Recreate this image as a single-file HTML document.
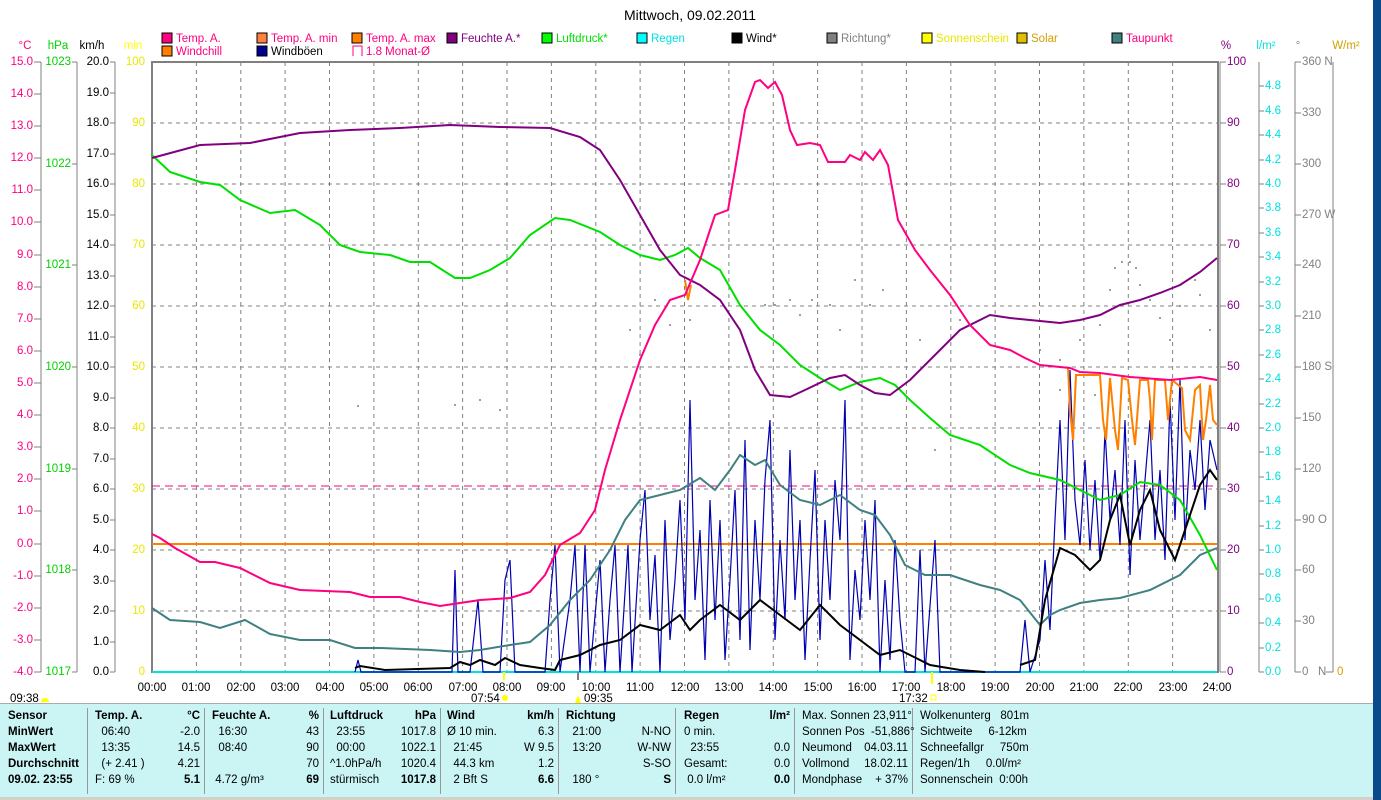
<!DOCTYPE html>
<html><head><meta charset="utf-8"><style>
html,body{margin:0;padding:0;background:#fff;width:1381px;height:800px;overflow:hidden;font-family:"Liberation Sans",sans-serif}
svg text{font-family:"Liberation Sans",sans-serif;font-size:11.5px}
.tb{position:absolute;left:0;top:703px;width:1373px;height:93px;background:#cbf5f5;border-top:1px solid #aaa}
.c{position:absolute;top:4px;height:86px;border-right:1px solid #999;font-size:11.5px;line-height:16px}
.c div{white-space:nowrap;position:relative;height:16px}
.c b{font-weight:bold}
.r{position:absolute;right:4px;top:0}
</style></head><body>
<svg width="1381" height="800" style="position:absolute;left:0;top:0">
<rect x="1373" y="0" width="8" height="800" fill="#0a4a8a"/>
<text x="690" y="20" text-anchor="middle" style="font-size:14px">Mittwoch, 09.02.2011</text>
<g>
<rect x="162" y="33" width="10" height="10" fill="#ff0080" stroke="#000"/><text x="176" y="42" fill="#ff0080">Temp. A.</text>
<rect x="257" y="33" width="10" height="10" fill="#ff8040" stroke="#000"/><text x="271" y="42" fill="#ff0080">Temp. A. min</text>
<rect x="352" y="33" width="10" height="10" fill="#ff8000" stroke="#000"/><text x="366" y="42" fill="#ff0080">Temp. A. max</text>
<rect x="447" y="33" width="10" height="10" fill="#800080" stroke="#000"/><text x="461" y="42" fill="#800080">Feuchte A.*</text>
<rect x="542" y="33" width="10" height="10" fill="#00ff00" stroke="#000"/><text x="556" y="42" fill="#00e000">Luftdruck*</text>
<rect x="637" y="33" width="10" height="10" fill="#00ffff" stroke="#000"/><text x="651" y="42" fill="#00e0e0">Regen</text>
<rect x="732" y="33" width="10" height="10" fill="#000" stroke="#000"/><text x="746" y="42">Wind*</text>
<rect x="827" y="33" width="10" height="10" fill="#808080" stroke="#000"/><text x="841" y="42" fill="#808080">Richtung*</text>
<rect x="922" y="33" width="10" height="10" fill="#ffff00" stroke="#000"/><text x="936" y="42" fill="#e8e800">Sonnenschein</text>
<rect x="1017" y="33" width="10" height="10" fill="#e0c000" stroke="#000"/><text x="1031" y="42" fill="#d0a000">Solar</text>
<rect x="1112" y="33" width="10" height="10" fill="#408080" stroke="#000"/><text x="1126" y="42" fill="#ff0080">Taupunkt</text>
<rect x="162" y="46" width="10" height="10" fill="#ff8000" stroke="#000"/><text x="176" y="55" fill="#ff0080">Windchill</text>
<rect x="257" y="46" width="10" height="10" fill="#000090" stroke="#000"/><text x="271" y="55">Windböen</text>
<path d="M353 56V46H362V56" fill="none" stroke="#ff0080"/><text x="366" y="55" fill="#ff0080">1.8 Monat-Ø</text>
</g>
<text x="25" y="49" fill="#ff0080" text-anchor="middle">°C</text>
<text x="58" y="49" fill="#00d000" text-anchor="middle">hPa</text>
<text x="92" y="49" text-anchor="middle">km/h</text>
<text x="133" y="49" fill="#ffff00" text-anchor="middle">min</text>
<text x="1226" y="49" fill="#800080" text-anchor="middle">%</text>
<text x="1266" y="49" fill="#00e0e0" text-anchor="middle">l/m²</text>
<text x="1298" y="49" fill="#808080" text-anchor="middle">°</text>
<text x="1346" y="49" fill="#d0a000" text-anchor="middle">W/m²</text>
<g stroke="#808080" fill="none">
<path d="M41 62V672M77 62V672M115 62V672M1259 62V672M1295 62V672M1333 62V672"/>
</g>
<g stroke="#808080" stroke-dasharray="4,4" stroke-width="1">
<path d="M196.4 62V672M240.8 62V672M285.1 62V672M329.5 62V672M373.9 62V672M418.3 62V672M462.6 62V672M507 62V672M551.4 62V672M595.8 62V672M640.1 62V672M684.5 62V672M728.9 62V672M773.3 62V672M817.6 62V672M862 62V672M906.4 62V672M950.8 62V672M995.1 62V672M1039.5 62V672M1083.9 62V672M1128.3 62V672M1172.6 62V672"/>
<path d="M152 123H1217M152 184H1217M152 245H1217M152 306H1217M152 367H1217M152 428H1217M152 489H1217M152 550H1217M152 611H1217"/>
</g>
<rect x="152" y="62" width="1066" height="610" fill="none" stroke="#808080" stroke-width="2"/>
<path d="M1220 62V672" stroke="#808080"/>
<g fill="#ff0080" text-anchor="end" dominant-baseline="middle">
<text x="33" y="62">15.0</text><text x="33" y="94">14.0</text><text x="33" y="126">13.0</text><text x="33" y="158">12.0</text><text x="33" y="190">11.0</text><text x="33" y="222">10.0</text><text x="33" y="255">9.0</text><text x="33" y="287">8.0</text><text x="33" y="319">7.0</text><text x="33" y="351">6.0</text><text x="33" y="383">5.0</text><text x="33" y="415">4.0</text><text x="33" y="447">3.0</text><text x="33" y="479">2.0</text><text x="33" y="511">1.0</text><text x="33" y="544">0.0</text><text x="33" y="576">-1.0</text><text x="33" y="608">-2.0</text><text x="33" y="640">-3.0</text><text x="33" y="672">-4.0</text>
</g>
<g stroke="#808080"><path d="M34 62H41M34 94H41M34 126H41M34 158H41M34 190H41M34 222H41M34 255H41M34 287H41M34 319H41M34 351H41M34 383H41M34 415H41M34 447H41M34 479H41M34 511H41M34 544H41M34 576H41M34 608H41M34 640H41M34 672H41"/></g>
<g fill="#00d000" text-anchor="end" dominant-baseline="middle">
<text x="71" y="62">1023</text><text x="71" y="164">1022</text><text x="71" y="265">1021</text><text x="71" y="367">1020</text><text x="71" y="469">1019</text><text x="71" y="570">1018</text><text x="71" y="672">1017</text>
</g>
<g stroke="#808080"><path d="M72 62H77M72 164H77M72 265H77M72 367H77M72 469H77M72 570H77M72 672H77"/></g>
<g text-anchor="end" dominant-baseline="middle">
<text x="109" y="62">20.0</text><text x="109" y="93">19.0</text><text x="109" y="123">18.0</text><text x="109" y="154">17.0</text><text x="109" y="184">16.0</text><text x="109" y="215">15.0</text><text x="109" y="245">14.0</text><text x="109" y="276">13.0</text><text x="109" y="306">12.0</text><text x="109" y="337">11.0</text><text x="109" y="367">10.0</text><text x="109" y="398">9.0</text><text x="109" y="428">8.0</text><text x="109" y="459">7.0</text><text x="109" y="489">6.0</text><text x="109" y="520">5.0</text><text x="109" y="550">4.0</text><text x="109" y="581">3.0</text><text x="109" y="611">2.0</text><text x="109" y="642">1.0</text><text x="109" y="672">0.0</text>
</g>
<g stroke="#808080"><path d="M110 62H115M110 93H115M110 123H115M110 154H115M110 184H115M110 215H115M110 245H115M110 276H115M110 306H115M110 337H115M110 367H115M110 398H115M110 428H115M110 459H115M110 489H115M110 520H115M110 550H115M110 581H115M110 611H115M110 642H115M110 672H115"/></g>
<g fill="#e8e800" text-anchor="end" dominant-baseline="middle">
<text x="145" y="62">100</text><text x="145" y="123">90</text><text x="145" y="184">80</text><text x="145" y="245">70</text><text x="145" y="306">60</text><text x="145" y="367">50</text><text x="145" y="428">40</text><text x="145" y="489">30</text><text x="145" y="550">20</text><text x="145" y="611">10</text><text x="145" y="672">0</text>
</g>
<g fill="#800080" dominant-baseline="middle">
<text x="1227" y="62">100</text><text x="1227" y="123">90</text><text x="1227" y="184">80</text><text x="1227" y="245">70</text><text x="1227" y="306">60</text><text x="1227" y="367">50</text><text x="1227" y="428">40</text><text x="1227" y="489">30</text><text x="1227" y="550">20</text><text x="1227" y="611">10</text><text x="1227" y="672">0</text>
</g>
<g stroke="#808080"><path d="M1220 62H1226M1220 123H1226M1220 184H1226M1220 245H1226M1220 306H1226M1220 367H1226M1220 428H1226M1220 489H1226M1220 550H1226M1220 611H1226M1220 672H1226"/></g>
<g fill="#00e0e0" dominant-baseline="middle">
<text x="1265" y="86">4.8</text><text x="1265" y="111">4.6</text><text x="1265" y="135">4.4</text><text x="1265" y="160">4.2</text><text x="1265" y="184">4.0</text><text x="1265" y="208">3.8</text><text x="1265" y="233">3.6</text><text x="1265" y="257">3.4</text><text x="1265" y="282">3.2</text><text x="1265" y="306">3.0</text><text x="1265" y="330">2.8</text><text x="1265" y="355">2.6</text><text x="1265" y="379">2.4</text><text x="1265" y="404">2.2</text><text x="1265" y="428">2.0</text><text x="1265" y="452">1.8</text><text x="1265" y="477">1.6</text><text x="1265" y="501">1.4</text><text x="1265" y="526">1.2</text><text x="1265" y="550">1.0</text><text x="1265" y="574">0.8</text><text x="1265" y="599">0.6</text><text x="1265" y="623">0.4</text><text x="1265" y="648">0.2</text><text x="1265" y="672">0.0</text>
</g>
<g stroke="#808080"><path d="M1259 86H1264M1259 111H1264M1259 135H1264M1259 160H1264M1259 184H1264M1259 208H1264M1259 233H1264M1259 257H1264M1259 282H1264M1259 306H1264M1259 330H1264M1259 355H1264M1259 379H1264M1259 404H1264M1259 428H1264M1259 452H1264M1259 477H1264M1259 501H1264M1259 526H1264M1259 550H1264M1259 574H1264M1259 599H1264M1259 623H1264M1259 648H1264M1259 672H1264"/>
<path d="M1295 62H1301M1295 113H1301M1295 164H1301M1295 215H1301M1295 265H1301M1295 316H1301M1295 367H1301M1295 418H1301M1295 469H1301M1295 520H1301M1295 570H1301M1295 621H1301M1295 672H1301M1326 672H1333"/></g>
<g fill="#808080" dominant-baseline="middle">
<text x="1302" y="62">360 N</text><text x="1302" y="113">330</text><text x="1302" y="164">300</text><text x="1302" y="215">270 W</text><text x="1302" y="265">240</text><text x="1302" y="316">210</text><text x="1302" y="367">180 S</text><text x="1302" y="418">150</text><text x="1302" y="469">120</text><text x="1302" y="520">90  O</text><text x="1302" y="570">60</text><text x="1302" y="621">30</text><text x="1302" y="672">0</text><text x="1318" y="672">N</text>
</g>
<text x="1337" y="672" fill="#d0a000" dominant-baseline="middle">0</text>
<path d="M152 486H1217" stroke="#ff0080" stroke-dasharray="8,5" stroke-width="1"/>
<path d="M152 544H1217" stroke="#ff8000" stroke-width="2"/>
<path d="M152 672H1217" stroke="#00e0e0" stroke-width="2"/>
<g fill="#808080">
<circle cx="358" cy="406" r="1"/><circle cx="455" cy="405" r="1"/><circle cx="480" cy="400" r="1"/><circle cx="500" cy="410" r="1"/><circle cx="630" cy="330" r="1"/><circle cx="640" cy="355" r="1"/><circle cx="655" cy="300" r="1"/><circle cx="670" cy="325" r="1"/><circle cx="690" cy="320" r="1"/><circle cx="765" cy="305" r="1"/><circle cx="775" cy="305" r="1"/><circle cx="790" cy="300" r="1"/><circle cx="800" cy="315" r="1"/><circle cx="812" cy="300" r="1"/><circle cx="830" cy="305" r="1"/><circle cx="840" cy="330" r="1"/><circle cx="855" cy="280" r="1"/><circle cx="870" cy="305" r="1"/><circle cx="883" cy="290" r="1"/><circle cx="920" cy="340" r="1"/><circle cx="935" cy="450" r="1"/><circle cx="960" cy="320" r="1"/><circle cx="1040" cy="350" r="1"/><circle cx="1060" cy="360" r="1"/><circle cx="1080" cy="340" r="1"/><circle cx="1100" cy="325" r="1"/><circle cx="1110" cy="290" r="1"/><circle cx="1115" cy="268" r="1"/><circle cx="1122" cy="262" r="1"/><circle cx="1130" cy="262" r="1"/><circle cx="1136" cy="268" r="1"/><circle cx="1140" cy="285" r="1"/><circle cx="1150" cy="300" r="1"/><circle cx="1160" cy="318" r="1"/><circle cx="1170" cy="340" r="1"/><circle cx="1180" cy="306" r="1"/><circle cx="1195" cy="280" r="1"/><circle cx="1200" cy="295" r="1"/><circle cx="1210" cy="330" r="1"/><circle cx="1060" cy="390" r="1"/><circle cx="1095" cy="395" r="1"/>
</g>
<polyline fill="none" stroke="#0000b0" stroke-width="1.2" points="355,672 358,660 361,672 452,672 455,570 458,672 470,672 478,600 483,672 500,672 505,580 510,560 515,672 545,672 550,600 555,545 560,672 570,600 575,545 580,672 585,545 590,672 600,560 605,672 610,600 615,545 620,672 628,545 632,672 640,540 645,490 650,620 655,555 660,672 665,520 670,640 675,580 680,500 685,620 690,400 695,600 700,530 705,660 710,500 715,620 720,520 725,660 730,580 735,490 740,640 745,440 750,650 755,520 760,600 765,480 770,420 775,640 780,540 785,620 790,450 795,600 800,520 805,660 810,560 815,470 820,640 825,520 830,600 835,480 840,540 845,400 850,660 855,570 860,620 865,520 870,600 875,500 880,672 885,580 890,660 895,540 900,620 905,672 915,672 920,550 925,672 935,540 940,672 1020,672 1025,620 1030,672 1040,640 1045,560 1050,630 1055,520 1060,420 1065,540 1070,370 1075,500 1080,545 1085,460 1090,550 1095,480 1100,560 1105,430 1110,520 1115,470 1120,545 1125,420 1130,575 1135,460 1140,540 1145,480 1150,420 1155,540 1160,470 1165,560 1170,400 1175,520 1180,380 1185,540 1190,450 1195,490 1200,420 1205,510 1210,440 1217,470"/>
<polyline fill="none" stroke="#408080" stroke-width="2" points="152,608 170,620 200,622 220,628 245,620 270,634 300,640 330,640 355,648 380,648 430,650 460,652 480,650 510,645 530,642 550,625 570,600 590,580 610,550 625,520 640,500 660,495 680,490 700,478 715,490 730,470 740,455 755,465 765,460 780,485 800,500 820,505 840,495 860,510 875,515 890,535 905,565 925,575 950,575 980,585 1000,590 1020,600 1040,625 1050,615 1060,610 1080,603 1100,600 1120,598 1150,590 1180,575 1200,555 1217,548"/>
<polyline fill="none" stroke="#00e000" stroke-width="2" points="152,155 170,172 200,182 220,185 240,200 270,213 295,210 320,225 340,245 360,252 390,255 410,262 430,262 455,278 470,278 490,270 510,258 530,235 555,218 570,220 600,232 620,245 640,255 660,260 675,255 688,248 700,258 720,270 740,305 760,330 780,345 800,365 820,378 840,390 860,382 880,378 895,385 910,400 930,418 950,435 980,445 1010,465 1030,473 1060,480 1080,490 1100,500 1120,495 1140,482 1160,485 1180,500 1200,535 1217,570"/>
<polyline fill="none" stroke="#800080" stroke-width="2" points="152,158 200,145 250,143 300,133 350,130 400,128 450,125 500,127 550,128 580,137 600,150 620,180 640,215 660,250 680,275 700,285 720,300 740,330 755,370 770,395 790,397 805,390 830,378 845,375 860,385 875,393 890,395 910,380 930,360 960,330 990,315 1010,318 1030,320 1060,323 1080,320 1100,315 1120,305 1140,300 1160,293 1180,285 1200,272 1217,258"/>
<polyline fill="none" stroke="#ff8000" stroke-width="2" points="685,280 688,300 691,285"/>
<polyline fill="none" stroke="#ff8000" stroke-width="2" points="1068,367 1070,410 1073,440 1076,375 1100,375 1103,420 1106,440 1110,378 1115,430 1118,450 1122,378 1128,380 1132,420 1135,445 1140,380 1148,380 1150,400 1152,440 1155,380 1165,380 1168,420 1172,380 1182,388 1185,430 1190,440 1195,390 1200,385 1203,440 1206,420 1210,385 1213,420 1217,425"/>
<polyline fill="none" stroke="#ff0080" stroke-width="2" points="152,534 160,538 175,548 200,562 215,562 240,568 270,583 300,590 350,592 370,597 400,597 420,602 440,606 460,603 480,600 510,598 530,592 545,575 560,545 580,533 595,510 605,470 620,420 640,360 655,325 670,300 685,295 700,260 715,215 728,210 735,170 745,110 755,82 760,80 768,88 775,82 782,95 790,130 797,145 810,143 820,145 828,162 845,162 850,155 860,160 865,152 873,160 880,150 888,165 898,220 915,250 930,270 950,295 970,325 990,345 1010,350 1025,358 1040,365 1070,368 1080,372 1100,373 1130,377 1170,380 1200,377 1217,380"/>
<polyline fill="none" stroke="#000" stroke-width="2" points="355,668 360,666 385,670 450,668 460,662 470,665 480,660 495,665 505,658 520,665 540,668 555,670 560,660 580,655 600,645 620,640 640,625 660,630 680,615 690,630 700,620 720,605 740,620 760,600 780,615 800,630 820,605 840,625 860,640 880,655 900,650 930,665 960,670 985,672"/>
<polyline fill="none" stroke="#000" stroke-width="2" points="1020,665 1035,660 1045,600 1060,548 1075,555 1090,570 1100,560 1110,520 1120,495 1130,545 1140,510 1150,490 1160,530 1175,560 1185,530 1200,485 1210,470 1217,480"/>
<g text-anchor="middle">
<text x="152" y="691">00:00</text><text x="196" y="691">01:00</text><text x="241" y="691">02:00</text><text x="285" y="691">03:00</text><text x="330" y="691">04:00</text><text x="374" y="691">05:00</text><text x="418" y="691">06:00</text><text x="463" y="691">07:00</text><text x="507" y="691">08:00</text><text x="551" y="691">09:00</text><text x="596" y="691">10:00</text><text x="640" y="691">11:00</text><text x="685" y="691">12:00</text><text x="729" y="691">13:00</text><text x="773" y="691">14:00</text><text x="818" y="691">15:00</text><text x="862" y="691">16:00</text><text x="906" y="691">17:00</text><text x="951" y="691">18:00</text><text x="995" y="691">19:00</text><text x="1040" y="691">20:00</text><text x="1084" y="691">21:00</text><text x="1128" y="691">22:00</text><text x="1173" y="691">23:00</text><text x="1217" y="691">24:00</text>
</g>
<path d="M504 672V680M932 672V684" stroke="#ffff00" stroke-width="2"/>
<path d="M578 672V680" stroke="#808080" stroke-width="2"/>
<text x="10" y="702">09:38</text><path d="M41 702a4 4 0 0 1 8 0z" fill="#ffff00"/>
<text x="471" y="702">07:54</text><circle cx="505" cy="698" r="3" fill="#ffff00"/>
<text x="584" y="702">09:35</text><path d="M581 703L578 695L575 703z" fill="#ffff00"/>
<text x="899" y="702">17:32</text><rect x="931" y="695" width="5" height="5" fill="none" stroke="#ffff00"/>
<rect x="0" y="796" width="1373" height="4" fill="#d4d0c8"/>
</svg>
<div class="tb">
<div class="c" style="left:0;width:88px;padding-left:8px;box-sizing:border-box;font-weight:bold">
<div>Sensor</div><div>MinWert</div><div>MaxWert</div><div>Durchschnitt</div><div>09.02. 23:55</div></div>
<div class="c" style="left:88px;width:117px;padding-left:7px;box-sizing:border-box">
<div><b>Temp. A.</b><span class="r"><b>°C</b></span></div><div>&nbsp;&nbsp;06:40<span class="r">-2.0</span></div><div>&nbsp;&nbsp;13:35<span class="r">14.5</span></div><div>&nbsp;&nbsp;(+ 2.41 )<span class="r">4.21</span></div><div>F: 69 %<span class="r"><b>5.1</b></span></div></div>
<div class="c" style="left:205px;width:119px;padding-left:7px;box-sizing:border-box">
<div><b>Feuchte A.</b><span class="r"><b>%</b></span></div><div>&nbsp;&nbsp;16:30<span class="r">43</span></div><div>&nbsp;&nbsp;08:40<span class="r">90</span></div><div><span class="r">70</span></div><div>&nbsp;4.72 g/m³<span class="r"><b>69</b></span></div></div>
<div class="c" style="left:324px;width:117px;padding-left:6px;box-sizing:border-box">
<div><b>Luftdruck</b><span class="r"><b>hPa</b></span></div><div>&nbsp;&nbsp;23:55<span class="r">1017.8</span></div><div>&nbsp;&nbsp;00:00<span class="r">1022.1</span></div><div>^1.0hPa/h<span class="r">1020.4</span></div><div>stürmisch<span class="r"><b>1017.8</b></span></div></div>
<div class="c" style="left:441px;width:118px;padding-left:6px;box-sizing:border-box">
<div><b>Wind</b><span class="r"><b>km/h</b></span></div><div>Ø 10 min.<span class="r">6.3</span></div><div>&nbsp;&nbsp;21:45<span class="r">W 9.5</span></div><div>&nbsp;&nbsp;44.3 km<span class="r">1.2</span></div><div>&nbsp;&nbsp;2 Bft S<span class="r"><b>6.6</b></span></div></div>
<div class="c" style="left:559px;width:117px;padding-left:7px;box-sizing:border-box">
<div><b>Richtung</b></div><div>&nbsp;&nbsp;21:00<span class="r">N-NO</span></div><div>&nbsp;&nbsp;13:20<span class="r">W-NW</span></div><div><span class="r">S-SO</span></div><div>&nbsp;&nbsp;180 °<span class="r"><b>S</b></span></div></div>
<div class="c" style="left:676px;width:119px;padding-left:8px;box-sizing:border-box">
<div><b>Regen</b><span class="r"><b>l/m²</b></span></div><div>0 min.</div><div>&nbsp;&nbsp;23:55<span class="r">0.0</span></div><div>Gesamt:<span class="r">0.0</span></div><div>&nbsp;0.0 l/m²<span class="r"><b>0.0</b></span></div></div>
<div class="c" style="left:795px;width:118px;padding-left:7px;box-sizing:border-box">
<div>Max. Sonnen 23,911°</div><div>Sonnen Pos&nbsp; -51,886°</div><div>Neumond<span class="r">04.03.11</span></div><div>Vollmond<span class="r">18.02.11</span></div><div>Mondphase<span class="r">+ 37%</span></div></div>
<div class="c" style="left:913px;width:120px;padding-left:7px;box-sizing:border-box;border:none">
<div>Wolkenunterg&nbsp;&nbsp; 801m</div><div>Sichtweite&nbsp;&nbsp;&nbsp;&nbsp; 6-12km</div><div>Schneefallgr&nbsp;&nbsp;&nbsp;&nbsp; 750m</div><div>Regen/1h&nbsp;&nbsp;&nbsp;&nbsp; 0.0l/m²</div><div>Sonnenschein&nbsp; 0:00h</div></div>
</div>
</body></html>
